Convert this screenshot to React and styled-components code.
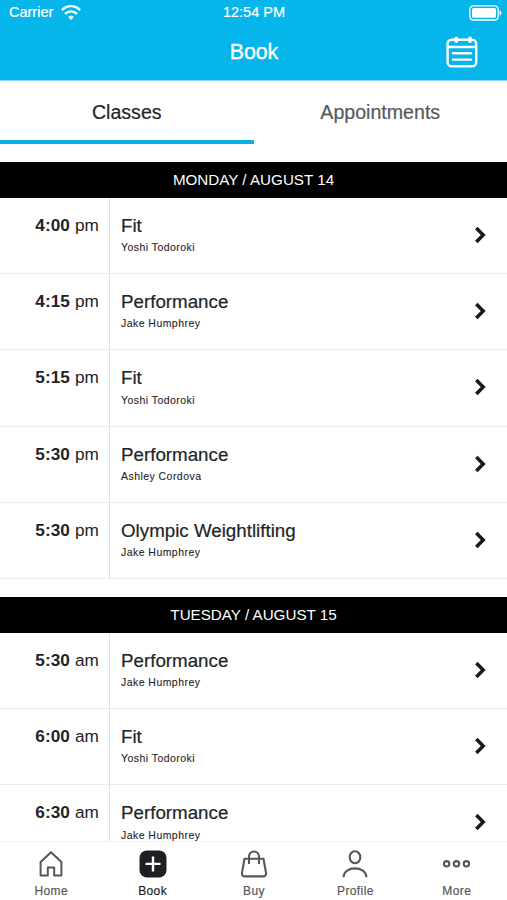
import React, { useState } from 'react'
import styled, { createGlobalStyle } from 'styled-components'

const GlobalStyle=createGlobalStyle`
    *{
        box-sizing: border-box;
    }
    body{
        margin: 0;
        background-color: white;
        font-family: "Liberation Sans", Arial, sans-serif;
        color: #222427;
    }
`

const Screen=styled.div`
    width: 100%;
    height: 900px;
    display: flex;
    flex-direction: column;
    overflow: hidden;
`

const Header=styled.header`
    height: 81px;
    flex: none;
    background-color: #06b5ea;
    border-bottom: 1px solid #86daf4;
    color: white;
`

const StatusBar=styled.div`
    height: 25px;
    padding: 0 5px 0 9px;
    display: grid;
    grid-template-columns: 1fr auto 1fr;
    align-items: center;
    font-size: 14.5px;
    line-height: 25px;
    -webkit-text-stroke: 0.2px white;
`

const Signal=styled.div`
    display: flex;
    align-items: center;
    gap: 8px;
`

const Clock=styled.div`
    padding-right: 3px;
`

const Battery=styled.div`
    display: flex;
    justify-content: flex-end;
`

const TitleBar=styled.div`
    height: 54px;
    padding-right: 29px;
    display: grid;
    grid-template-columns: 1fr auto 1fr;
    align-items: center;
`

const Title=styled.h1`
    grid-column: 2;
    margin: 0 0 0 30px;
    font-size: 21.3px;
    font-weight: normal;
    line-height: 54px;
    -webkit-text-stroke: 0.35px white;
`

const CalendarButton=styled.button`
    justify-self: end;
    padding: 0;
    border: none;
    background: none;
    color: white;
    display: flex;
    cursor: pointer;
`

const Tabs=styled.div`
    height: 63px;
    flex: none;
    display: flex;
`

const Tab=styled.button`
    flex: 1;
    padding: 3px 0 0;
    border: none;
    border-bottom: 4px solid ${props => props.$active ? '#0bb0e6' : 'transparent'};
    background: none;
    font-family: inherit;
    font-size: 19.6px;
    color: ${props => props.$active ? '#222427' : '#58595c'};
    -webkit-text-stroke: 0.2px;
    cursor: pointer;
`

const Schedule=styled.main`
    flex: 1;
    min-height: 0;
    overflow: hidden;
`

const Day=styled.section`
    padding-top: 18px;
`

const DayTitle=styled.h2`
    height: 36px;
    margin: 0;
    background-color: black;
    color: white;
    font-size: 15.2px;
    font-weight: normal;
    line-height: 36px;
    text-align: center;
`

const Row=styled.div`
    height: 76.2px;
    display: flex;
    border-bottom: 1px solid #ececed;
    cursor: pointer;
`

const Time=styled.div`
    width: 110px;
    padding: 16px 10px 0 0;
    border-right: 1px solid #dedfe0;
    font-size: 17.2px;
    line-height: 22px;
    letter-spacing: 0.1px;
    text-align: right;
`

const Info=styled.div`
    flex: 1;
    padding: 17px 0 0 11px;
`

const ClassName=styled.div`
    font-size: 18.75px;
    line-height: 22px;
    -webkit-text-stroke: 0.2px;
`

const Coach=styled.div`
    margin-top: 3.2px;
    font-size: 10.5px;
    line-height: 14px;
    letter-spacing: 0.45px;
    -webkit-text-stroke: 0.1px;
`

const Arrow=styled.div`
    padding: 0 20px 1px 0;
    display: flex;
    align-items: center;
    color: #17191b;
`

const Nav=styled.nav`
    height: 59px;
    flex: none;
    display: flex;
    border-top: 1px solid #f3f3f4;
    background-color: white;
`

const NavItem=styled.a`
    flex: 1;
    padding: 7px 0 0 1px;
    display: flex;
    flex-direction: column;
    align-items: center;
    gap: 5px;
    font-size: 12px;
    line-height: 16px;
    letter-spacing: 0.4px;
    -webkit-text-stroke: 0.2px;
    color: ${props => props.$active ? '#1d1f22' : '#55575b'};
    cursor: pointer;

    svg{
        display: block;
    }
`

const days=[
    {
        title: 'MONDAY / AUGUST 14',
        classes: [
            { time: '4:00', half: 'pm', name: 'Fit', coach: 'Yoshi Todoroki' },
            { time: '4:15', half: 'pm', name: 'Performance', coach: 'Jake Humphrey' },
            { time: '5:15', half: 'pm', name: 'Fit', coach: 'Yoshi Todoroki' },
            { time: '5:30', half: 'pm', name: 'Performance', coach: 'Ashley Cordova' },
            { time: '5:30', half: 'pm', name: 'Olympic Weightlifting', coach: 'Jake Humphrey' },
        ],
    },
    {
        title: 'TUESDAY / AUGUST 15',
        classes: [
            { time: '5:30', half: 'am', name: 'Performance', coach: 'Jake Humphrey' },
            { time: '6:00', half: 'am', name: 'Fit', coach: 'Yoshi Todoroki' },
            { time: '6:30', half: 'am', name: 'Performance', coach: 'Jake Humphrey' },
        ],
    },
]

const WifiIcon=() => (
    <svg width="20" height="15" viewBox="0 0 20 15" fill="none" stroke="white" strokeWidth="2.4">
        <path d="M0.9 5.2C6 -0.2 14 -0.2 19.1 5.2" />
        <path d="M4.1 8.9C7.4 5.5 12.6 5.5 15.9 8.9" />
        <path d="M10 14.9L7.2 12C8.7 10.2 11.3 10.2 12.8 12Z" fill="white" stroke="none" />
    </svg>
)

const BatteryIcon=() => (
    <svg width="33" height="16" viewBox="0 0 33 16" fill="none">
        <rect x="0.8" y="0.8" width="28.4" height="14.2" rx="3.6" stroke="white" strokeWidth="1.3" />
        <rect x="3" y="3" width="24" height="9.8" rx="1.6" fill="white" />
        <path d="M30.6 5.2C33 6 33 9.8 30.6 10.6Z" fill="white" />
    </svg>
)

const CalendarIcon=() => (
    <svg width="32" height="32" viewBox="0 0 32 32" fill="none" stroke="white" strokeWidth="2.4" strokeLinecap="round">
        <rect x="1.6" y="3.8" width="28.6" height="26.4" rx="4" />
        <path d="M2 11H30" />
        <path d="M10.3 2.2V5.2M24 2.2V5.2" strokeWidth="3.6" />
        <path d="M7 17.2H25M7 23.6H25" />
    </svg>
)

const ArrowIcon=() => (
    <svg width="13" height="18" viewBox="0 0 13 18" fill="none" stroke="currentColor" strokeWidth="3.5">
        <path d="M2.3 2L9.2 9L2.3 16" />
    </svg>
)

const HomeIcon=() => (
    <svg width="28" height="29" viewBox="0 0 28 29" fill="none" stroke="currentColor" strokeWidth="2">
        <path d="M3.6 26.6V13L14 3.2L24.4 13V26.6H17.2V18.4H10.8V26.6Z" strokeLinejoin="round" />
    </svg>
)

const BookIcon=() => (
    <svg width="28" height="29" viewBox="0 0 28 29" fill="none">
        <rect x="0.5" y="1.4" width="27" height="27" rx="7.5" fill="#1d1f22" />
        <path d="M14 7.4V22.4M6.5 14.9H21.5" stroke="white" strokeWidth="2.4" />
    </svg>
)

const BagIcon=() => (
    <svg width="28" height="29" viewBox="0 0 28 29" fill="none" stroke="currentColor" strokeWidth="2.1">
        <path d="M4.5 9.8H23.5L26 23.9Q26.4 27.4 23 27.4H5Q1.6 27.4 2 23.9Z" strokeLinejoin="round" />
        <path d="M9 15V7.4C9 0.8 19 0.8 19 7.4V15" />
    </svg>
)

const ProfileIcon=() => (
    <svg width="28" height="29" viewBox="0 0 28 29" fill="none" stroke="currentColor" strokeWidth="2.1">
        <ellipse cx="14" cy="8.2" rx="5.3" ry="6" />
        <path d="M2.6 28.2C2.8 16.4 25.2 16.4 25.4 28.2" />
    </svg>
)

const MoreIcon=() => (
    <svg width="28" height="29" viewBox="0 0 28 29" fill="none" stroke="currentColor" strokeWidth="2.1">
        <circle cx="3.6" cy="14.8" r="2.7" />
        <circle cx="13.5" cy="14.8" r="2.7" />
        <circle cx="23.4" cy="14.8" r="2.7" />
    </svg>
)

const links=[
    { label: 'Home', Icon: HomeIcon },
    { label: 'Book', Icon: BookIcon },
    { label: 'Buy', Icon: BagIcon },
    { label: 'Profile', Icon: ProfileIcon },
    { label: 'More', Icon: MoreIcon },
]

const ClassRow = ({item}) => {
    return (
    <Row>
        <Time><b>{item.time}</b> {item.half}</Time>
        <Info>
            <ClassName>{item.name}</ClassName>
            <Coach>{item.coach}</Coach>
        </Info>
        <Arrow>
            <ArrowIcon/>
        </Arrow>
    </Row>
  )
}

const App = () => {

    const [tab,setTab]=useState('Classes');
    return (
    <Screen>
        <GlobalStyle/>
        <Header>
            <StatusBar>
                <Signal>Carrier <WifiIcon/></Signal>
                <Clock>12:54 PM</Clock>
                <Battery><BatteryIcon/></Battery>
            </StatusBar>
            <TitleBar>
                <Title>Book</Title>
                <CalendarButton aria-label="Calendar">
                    <CalendarIcon/>
                </CalendarButton>
            </TitleBar>
        </Header>
        <Tabs>
            {['Classes','Appointments'].map((name) => (
                <Tab key={name} $active={tab===name} onClick={()=>setTab(name)}>{name}</Tab>
            ))}
        </Tabs>
        <Schedule>
            {days.map((day) => (
                <Day key={day.title}>
                    <DayTitle>{day.title}</DayTitle>
                    {day.classes.map((item) => (
                        <ClassRow item={item} key={item.time+item.name}/>
                    ))}
                </Day>
            ))}
        </Schedule>
        <Nav>
            {links.map(({label,Icon}) => (
                <NavItem key={label} $active={label==='Book'}>
                    <Icon/>
                    {label}
                </NavItem>
            ))}
        </Nav>
    </Screen>
  )
}

export default App
